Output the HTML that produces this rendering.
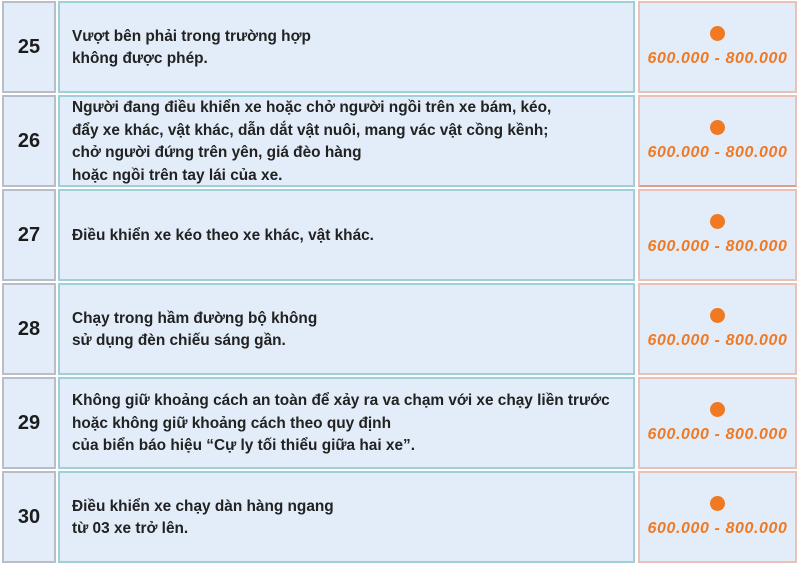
<!DOCTYPE html>
<html><head><meta charset="utf-8"><style>
body{margin:0;width:800px;height:566px;background:#fff;position:relative;overflow:hidden;font-family:"Liberation Sans",sans-serif}
.c{position:absolute;box-sizing:border-box;background:#e3edf9}
.n{left:2px;width:54px;border:2px solid #b9bec6;font-weight:bold;font-size:20px;color:#1c1c1c;display:flex;align-items:center;justify-content:center}
.t{left:58px;width:577px;border:2px solid #9fd0d8;font-weight:bold;font-size:15.4px;color:#222;line-height:22.5px;display:flex;align-items:center;padding-left:12px;padding-top:2px}
.p{left:638px;width:159px;border:2px solid #e8c2b8;text-align:center}
.d{width:15px;height:15px;border-radius:50%;background:#f07a24;margin:23px auto 9px}
.a{font-weight:bold;font-style:italic;font-size:16px;letter-spacing:0.6px;color:#f07a24}
</style></head><body>
<div class="c n" style="top:1px;height:92px">25</div>
<div class="c t" style="top:1px;height:92px"><div>Vượt bên phải trong trường hợp<br>không được phép.</div></div>
<div class="c p" style="top:1px;height:92px"><div class="d"></div><div class="a">600.000 - 800.000</div></div>

<div class="c n" style="top:95px;height:92px">26</div>
<div class="c t" style="top:95px;height:92px"><div>Người đang điều khiển xe hoặc chở người ngồi trên xe bám, kéo,<br>đẩy xe khác, vật khác, dẫn dắt vật nuôi, mang vác vật cồng kềnh;<br>chở người đứng trên yên, giá đèo hàng<br>hoặc ngồi trên tay lái của xe.</div></div>
<div class="c p" style="top:95px;height:92px;border-bottom-color:#e59a90"><div class="d"></div><div class="a">600.000 - 800.000</div></div>

<div class="c n" style="top:189px;height:92px">27</div>
<div class="c t" style="top:189px;height:92px"><div>Điều khiển xe kéo theo xe khác, vật khác.</div></div>
<div class="c p" style="top:189px;height:92px"><div class="d"></div><div class="a">600.000 - 800.000</div></div>

<div class="c n" style="top:283px;height:92px">28</div>
<div class="c t" style="top:283px;height:92px"><div>Chạy trong hầm đường bộ không<br>sử dụng đèn chiếu sáng gần.</div></div>
<div class="c p" style="top:283px;height:92px"><div class="d"></div><div class="a">600.000 - 800.000</div></div>

<div class="c n" style="top:377px;height:92px">29</div>
<div class="c t" style="top:377px;height:92px"><div>Không giữ khoảng cách an toàn để xảy ra va chạm với xe chạy liền trước<br>hoặc không giữ khoảng cách theo quy định<br>của biển báo hiệu “Cự ly tối thiểu giữa hai xe”.</div></div>
<div class="c p" style="top:377px;height:92px"><div class="d"></div><div class="a">600.000 - 800.000</div></div>

<div class="c n" style="top:471px;height:92px">30</div>
<div class="c t" style="top:471px;height:92px"><div>Điều khiển xe chạy dàn hàng ngang<br>từ 03 xe trở lên.</div></div>
<div class="c p" style="top:471px;height:92px"><div class="d"></div><div class="a">600.000 - 800.000</div></div>
</body></html>
